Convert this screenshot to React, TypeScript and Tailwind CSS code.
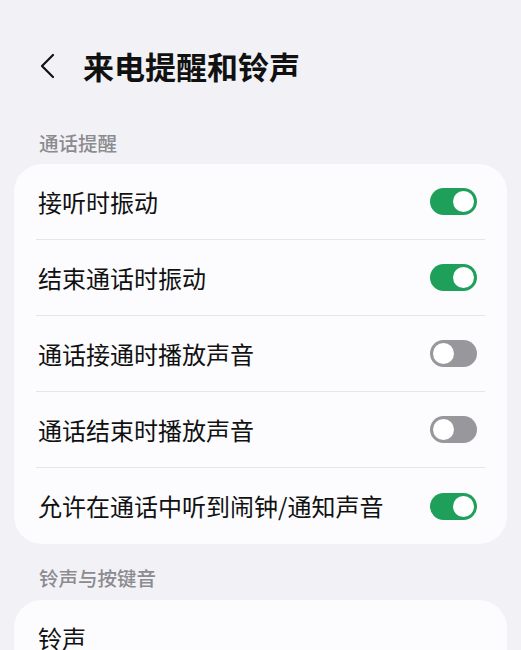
import React from "react";

const font = { fontFamily: '"Noto Sans CJK SC", "Noto Sans", sans-serif' };

function Toggle({ on }: { on: boolean }) {
  return (
    <div
      className={
        "flex h-[27px] w-[47px] items-center rounded-full px-[3px] " +
        (on ? "justify-end bg-[#1fa05a]" : "justify-start bg-[#97979c]")
      }
    >
      <div className="h-[21px] w-[21px] rounded-full bg-white" />
    </div>
  );
}

const rows: { label: string; on: boolean }[] = [
  { label: "接听时振动", on: true },
  { label: "结束通话时振动", on: true },
  { label: "通话接通时播放声音", on: false },
  { label: "通话结束时播放声音", on: false },
  { label: "允许在通话中听到闹钟/通知声音", on: true },
];

export default function App() {
  return (
    <div className="h-[650px] w-[521px] overflow-hidden bg-[#f2f2f6]" style={font}>
      <div className="flex h-[132px] items-start pt-[44px]">
        <div className="flex items-center">
          <svg width="56" height="44" viewBox="0 0 56 44" className="ml-[14px]">
            <path d="M39 11 L28 22 L39 33" fill="none" stroke="#111" strokeWidth="2.2" strokeLinecap="round" strokeLinejoin="round" />
          </svg>
          <div className="ml-[13px] text-[31px] font-bold leading-[44px] text-[#111]">来电提醒和铃声</div>
        </div>
      </div>
      <div className="px-[39px] pb-[10px] text-[19.5px] font-medium leading-[22px] text-[#8b8b90]">通话提醒</div>
      <div className="mx-[14px] rounded-[28px] bg-[#fcfcfe] px-[22px]">
        {rows.map((r, i) => (
          <div
            key={r.label}
            className={"flex h-[76px] items-center justify-between " + (i < rows.length - 1 ? "border-b border-[#e6e6ea]" : "")}
          >
            <span className="pl-[2px] text-[24px] leading-none text-[#111]">{r.label}</span>
            <div className="mr-[8px]">
              <Toggle on={r.on} />
            </div>
          </div>
        ))}
      </div>
      <div className="px-[39px] pb-[11px] pt-[23px] text-[19.5px] font-medium leading-[22px] text-[#8b8b90]">铃声与按键音</div>
      <div className="mx-[14px] rounded-t-[28px] bg-[#fcfcfe] px-[22px] pt-[24px]">
        <span className="block pl-[2px] text-[24px] leading-[28px] text-[#111]">铃声</span>
      </div>
    </div>
  );
}
